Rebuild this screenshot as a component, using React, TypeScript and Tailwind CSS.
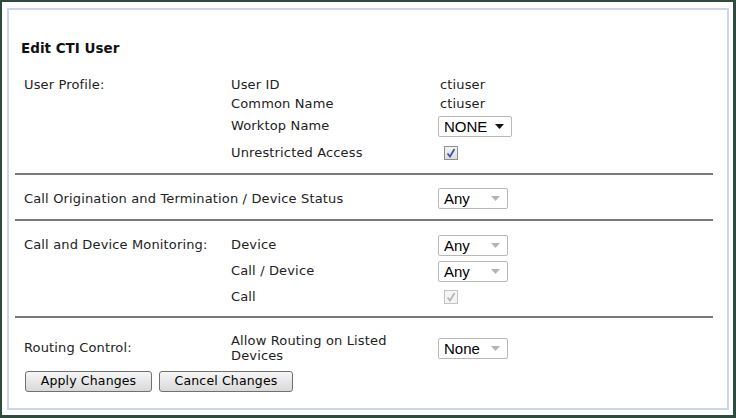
import React from 'react'

const labelFont = "font-['DejaVu_Sans',Tahoma,sans-serif] text-[13px] tracking-[0.15px] text-[#222]"

function Select({ value, width, dark }: { value: string; width: string; dark?: boolean }) {
  return (
    <div
      className={`flex h-[21px] items-center justify-between rounded-[2px] border border-[#b8b8b8] bg-white pl-[5px] pr-[7px] ${width}`}
    >
      <span className="font-['Liberation_Sans',Arial,sans-serif] text-[15px] leading-none tracking-normal text-black">{value}</span>
      <svg width="9" height="5" viewBox="0 0 9 5">
        <path d="M0 0 L9 0 L4.5 5 Z" fill={dark ? '#111' : '#b5b5b5'} />
      </svg>
    </div>
  )
}

function Checkbox({ disabled }: { disabled?: boolean }) {
  return (
    <div
      className={`ml-[6px] flex h-[14px] w-[14px] items-center justify-center border ${
        disabled ? 'border-[#c4c4c4] bg-[#f4f4f4]' : 'border-[#8e8f8f] bg-gradient-to-b from-[#f4f4f4] to-[#dcdcdc]'
      }`}
    >
      <svg width="10" height="10" viewBox="0 0 10 10">
        <path
          d="M1.5 5.5 L4 8.5 L8.5 1"
          fill="none"
          stroke={disabled ? '#b4b4b4' : '#3d4fa6'}
          strokeWidth="1.7"
        />
      </svg>
    </div>
  )
}

function Separator() {
  return <div className="h-[2px] bg-[#7a7a7a]" />
}

function Row({ a, b, c, h }: { a?: React.ReactNode; b?: React.ReactNode; c?: React.ReactNode; h: string }) {
  return (
    <div className={`grid grid-cols-[207px_207px_1fr] items-center ${h}`}>
      <div>{a}</div>
      <div>{b}</div>
      <div className="flex items-center">{c}</div>
    </div>
  )
}

function Button({ children, width }: { children: React.ReactNode; width: string }) {
  return (
    <button
      className={`h-[21px] rounded-[3px] border border-[#707070] bg-gradient-to-b from-[#f6f6f6] to-[#d9d9d9] ${width} font-['DejaVu_Sans',Tahoma,sans-serif] text-[12.5px] text-black`}
    >
      {children}
    </button>
  )
}

export default function App() {
  return (
    <div className="h-[418px] w-[736px] border-b-[3px] border-l-[2px] border-r-[3px] border-t-[2px] border-[#2f4b40] bg-white pb-[5px] pl-[5px] pr-[4px] pt-[6px]">
      <div className="h-full border-2 border-[#cad6f0] bg-white pl-[6px] pr-[14px]">
        <div className="pl-[6px] pt-[28px] font-['DejaVu_Sans',Tahoma,sans-serif] text-[13.5px] font-bold leading-[20px] text-[#111]">
          Edit CTI User
        </div>

        <div className={`${labelFont} mt-[17px]`}>
          <div className="pl-[9px]">
            <Row h="h-[19px]" a="User Profile:" b="User ID" c={<span className="pl-[2px]">ctiuser</span>} />
            <Row h="h-[19px]" b="Common Name" c={<span className="pl-[2px]">ctiuser</span>} />
            <Row h="h-[26px]" b="Worktop Name" c={<Select value="NONE" width="w-[74px]" dark />} />
            <Row h="h-[27px]" b="Unrestricted Access" c={<Checkbox />} />
          </div>
          <div className="mt-[7px]">
            <Separator />
          </div>
          <div className="pl-[9px] pt-[12px]">
            <Row
              h="h-[23px]"
              a={<span className="whitespace-nowrap">Call Origination and Termination / Device Status</span>}
              c={<Select value="Any" width="w-[70px]" />}
            />
          </div>
          <div className="mt-[9px]">
            <Separator />
          </div>
          <div className="pl-[9px] pt-[11px]">
            <Row h="h-[26px]" a="Call and Device Monitoring:" b="Device" c={<Select value="Any" width="w-[70px]" />} />
            <Row h="h-[26px]" b="Call / Device" c={<Select value="Any" width="w-[70px]" />} />
            <Row h="h-[26px]" b="Call" c={<Checkbox disabled />} />
          </div>
          <div className="mt-[6px]">
            <Separator />
          </div>
          <div className="pl-[9px] pt-[14px]">
            <Row
              h="h-[32px]"
              a="Routing Control:"
              b={<div className="leading-[15px]">Allow Routing on Listed<br />Devices</div>}
              c={<Select value="None" width="w-[70px]" />}
            />
          </div>
          <div className="flex gap-[7px] pl-[10px] pt-[7px]">
            <Button width="w-[127px]">Apply Changes</Button>
            <Button width="w-[134px]">Cancel Changes</Button>
          </div>
        </div>
      </div>
    </div>
  )
}
